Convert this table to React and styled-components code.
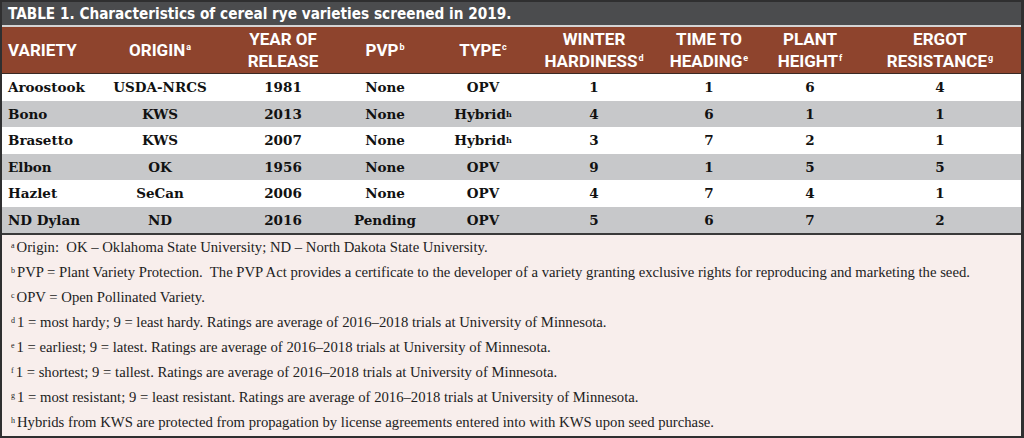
import React from "react";
import styled, { createGlobalStyle } from "styled-components";

const Global = createGlobalStyle`
  html, body { margin: 0; padding: 0; background: #ffffff; }
  body { width: 1024px; height: 438px; overflow: hidden; }
`;

const COLS = "102px 112px 134px 70px 126px 96px 134px 68px 178px";

const Frame = styled.div`
  width: 1024px;
  height: 438px;
  box-sizing: border-box;
  border: 2px solid #2f2f30;
  border-right-width: 3px;
  display: flex;
  flex-direction: column;
  background: #f8eeec;
`;

const TitleBar = styled.div`
  height: 23px;
  background: #4b4c4e;
  color: #ffffff;
  font-family: "DejaVu Sans Condensed", "DejaVu Sans", sans-serif;
  font-stretch: condensed;
  font-weight: 700;
  font-size: 15.2px;
  line-height: 24px;
  padding-left: 6px;
  border-bottom: 2px solid #d4d4d4;
  white-space: nowrap;
`;

const HeadRow = styled.div`
  display: grid;
  grid-template-columns: ${COLS};
  height: 46px;
  background: #8e442d;
  border-bottom: 1px solid #3a2a25;
`;

const HeadCell = styled.div`
  display: flex;
  align-items: center;
  justify-content: ${(p) => (p.$left ? "flex-start" : "center")};
  text-align: center;
  padding-left: ${(p) => (p.$left ? "6px" : p.$shift ? `${p.$shift}px` : "0")};
  color: #ffffff;
  font-family: "Liberation Sans Narrow", "Roboto", "Liberation Sans", sans-serif;
  font-weight: 700;
  font-size: 17px;
  line-height: 22px;
`;

const HeadSup = styled.sup`
  font-size: 9px;
  vertical-align: 6px;
  line-height: 0;
  margin-left: 1px;
`;

const Row = styled.div`
  display: grid;
  grid-template-columns: ${COLS};
  height: 26.5px;
  background: ${(p) => (p.$alt ? "#c7c8ca" : "#ffffff")};
`;

const Cell = styled.div`
  display: flex;
  align-items: center;
  justify-content: ${(p) => (p.$left ? "flex-start" : "center")};
  padding-left: ${(p) => (p.$left ? "6px" : p.$shift ? `${p.$shift}px` : "0")};
  color: #111111;
  font-family: "DejaVu Serif", "Liberation Serif", serif;
  font-weight: 700;
  font-size: 13.5px;
  white-space: nowrap;
`;

const CellSup = styled.sup`
  font-size: 8px;
  vertical-align: 5px;
  line-height: 0;
`;

const Notes = styled.div`
  flex: 1;
  border-top: 2px solid #3a3a3a;
  background: #f8eeec;
  padding-left: 9px;
`;

const Note = styled.div`
  height: 25px;
  line-height: 25px;
  font-family: "Liberation Serif", "Times New Roman", serif;
  font-size: 14.7px;
  color: #222222;
  white-space: pre;
`;

const NoteSup = styled.sup`
  font-size: 8px;
  vertical-align: 4px;
  line-height: 0;
  margin-right: 2px;
`;

const headers = [
  { t: "VARIETY", left: true },
  { t: "ORIGIN", s: "a" },
  { t: ["YEAR OF", "RELEASE"] },
  { t: "PVP", s: "b" },
  { t: "TYPE", s: "c" },
  { t: ["WINTER", "HARDINESS"], s: "d" },
  { t: ["TIME TO", "HEADING"], s: "e" },
  { t: ["PLANT", "HEIGHT"], s: "f" },
  { t: ["ERGOT", "RESISTANCE"], s: "g", shift: 14 },
];

const rows = [
  ["Aroostook", "USDA-NRCS", "1981", "None", "OPV", "1", "1", "6", "4"],
  ["Bono", "KWS", "2013", "None", "Hybrid*", "4", "6", "1", "1"],
  ["Brasetto", "KWS", "2007", "None", "Hybrid*", "3", "7", "2", "1"],
  ["Elbon", "OK", "1956", "None", "OPV", "9", "1", "5", "5"],
  ["Hazlet", "SeCan", "2006", "None", "OPV", "4", "7", "4", "1"],
  ["ND Dylan", "ND", "2016", "Pending", "OPV", "5", "6", "7", "2"],
];

const notes = [
  ["a", "Origin:  OK \u2013 Oklahoma State University; ND \u2013 North Dakota State University."],
  ["b", "PVP = Plant Variety Protection.  The PVP Act provides a certificate to the developer of a variety granting exclusive rights for reproducing and marketing the seed."],
  ["c", "OPV = Open Pollinated Variety."],
  ["d", "1 = most hardy; 9 = least hardy. Ratings are average of 2016\u20132018 trials at University of Minnesota."],
  ["e", "1 = earliest; 9 = latest. Ratings are average of 2016\u20132018 trials at University of Minnesota."],
  ["f", "1 = shortest; 9 = tallest. Ratings are average of 2016\u20132018 trials at University of Minnesota."],
  ["g", "1 = most resistant; 9 = least resistant. Ratings are average of 2016\u20132018 trials at University of Minnesota."],
  ["h", "Hybrids from KWS are protected from propagation by license agreements entered into with KWS upon seed purchase."],
];

function HeadText({ h }) {
  const lines = Array.isArray(h.t) ? h.t : [h.t];
  return (
    <span>
      {lines.map((l, i) => (
        <React.Fragment key={i}>
          {i > 0 && <br />}
          {l}
          {i === lines.length - 1 && h.s && <HeadSup>{h.s}</HeadSup>}
        </React.Fragment>
      ))}
    </span>
  );
}

export default function App() {
  return (
    <>
      <Global />
      <Frame>
        <TitleBar>TABLE 1. Characteristics of cereal rye varieties screened in 2019.</TitleBar>
        <HeadRow>
          {headers.map((h, i) => (
            <HeadCell key={i} $left={h.left} $shift={h.shift}>
              <HeadText h={h} />
            </HeadCell>
          ))}
        </HeadRow>
        {rows.map((r, ri) => (
          <Row key={ri} $alt={ri % 2 === 1}>
            {r.map((c, ci) => (
              <Cell key={ci} $left={ci === 0} $shift={ci === 8 ? 14 : 0}>
                {c.endsWith("*") ? (
                  <>
                    {c.slice(0, -1)}
                    <CellSup>h</CellSup>
                  </>
                ) : (
                  c
                )}
              </Cell>
            ))}
          </Row>
        ))}
        <Notes>
          {notes.map(([s, t]) => (
            <Note key={s}>
              <NoteSup>{s}</NoteSup>
              {t}
            </Note>
          ))}
        </Notes>
      </Frame>
    </>
  );
}
